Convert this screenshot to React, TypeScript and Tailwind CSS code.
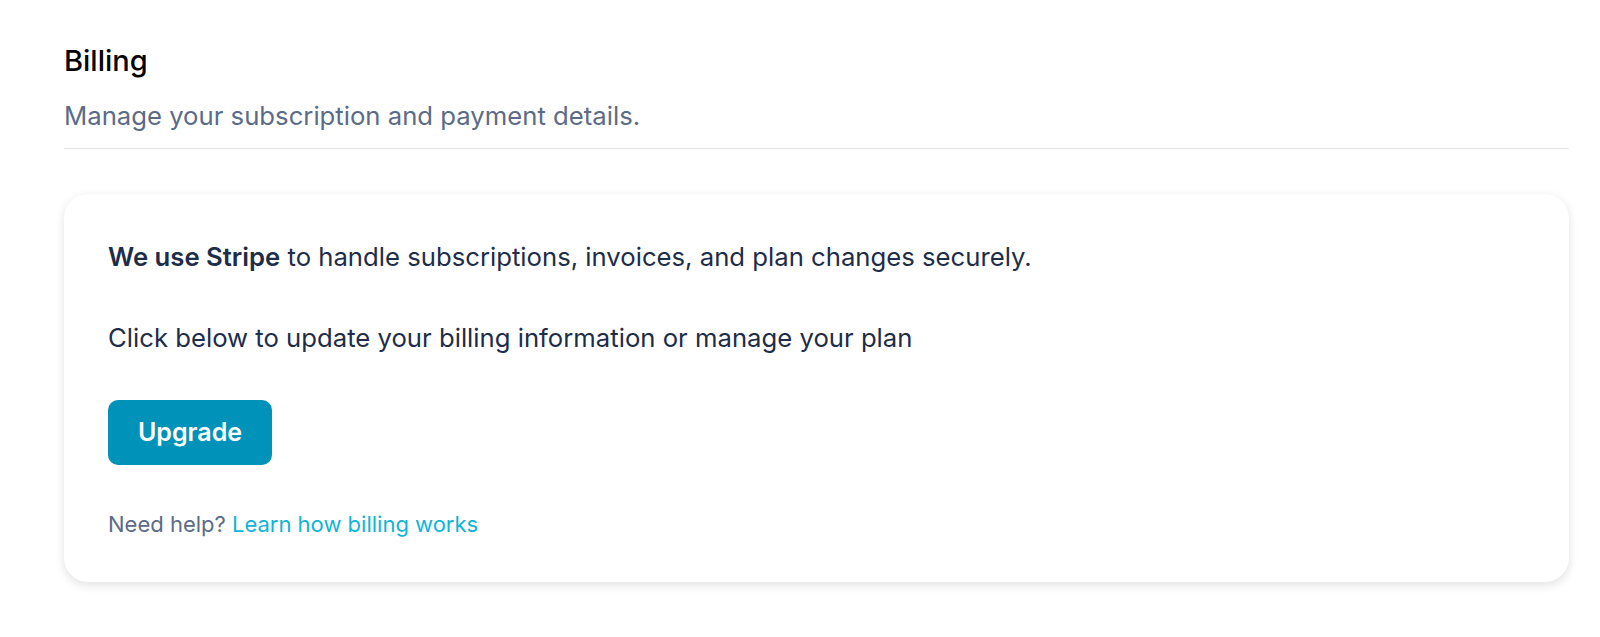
export default function App() {
  return (
    <div
      className="bg-white pl-[64px] pr-[31px] pt-[43px] pb-[50px]"
      style={{ fontFamily: "Inter, 'Noto Sans', sans-serif" }}
    >
      {/* Header */}
      <div className="border-b border-[#e2e4ea] pb-[15px]">
        <h1 className="text-[29px] font-medium leading-[36px] text-black">Billing</h1>
        <p className="mt-[20px] text-[25.7px] leading-[34px] text-[#5b6b88]">
          Manage your subscription and payment details.
        </p>
      </div>

      {/* Stripe card */}
      <div className="mt-[45px] rounded-[24px] bg-white px-[44px] pt-[46px] pb-[44px] shadow-[0_3px_10px_rgba(15,23,42,0.13)]">
        <p className="text-[25.7px] leading-[34px] text-[#1e2d4a]">
          <span className="font-semibold">We use Stripe</span> to handle subscriptions, invoices, and plan changes securely.
        </p>
        <p className="mt-[47px] text-[25.7px] leading-[34px] text-[#1e2d4a]">
          Click below to update your billing information or manage your plan
        </p>
        <button className="mt-[45px] h-[65px] w-[164px] rounded-[10px] bg-[#0092b8] text-[25px] font-semibold text-white">
          Upgrade
        </button>
        <p className="mt-[45px] text-[22px] leading-[28px] text-[#5b6b88]">
          Need help? <a className="text-[#0fb4d8]" href="#">Learn how billing works</a>
        </p>
      </div>
    </div>
  );
}
